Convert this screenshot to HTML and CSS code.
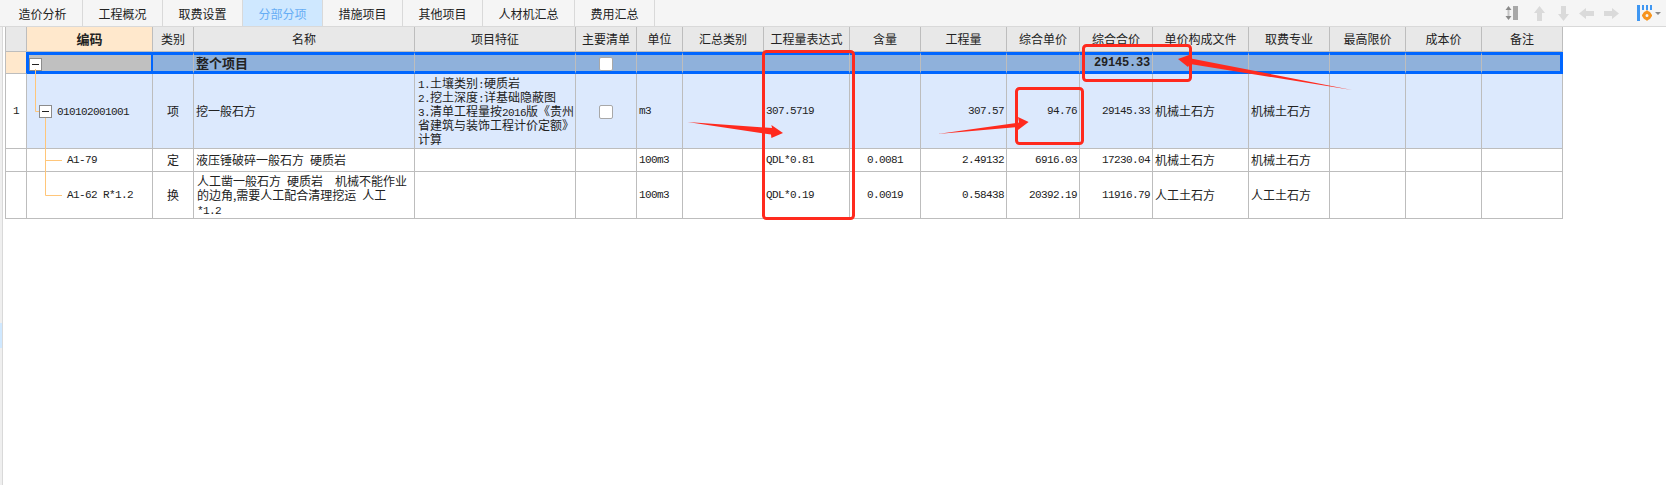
FILE: index.html
```html
<!DOCTYPE html>
<html lang="zh-CN">
<head>
  <meta charset="UTF-8" />
  <title>分部分项</title>
  <link rel="stylesheet" href="styles.css">
</head>
<body>

<div class="page">
  <div class="toolbar">
    <div class="tab tab-first">造价分析</div>
    <div class="tab">工程概况</div>
    <div class="tab">取费设置</div>
    <div class="tab active">分部分项</div>
    <div class="tab">措施项目</div>
    <div class="tab">其他项目</div>
    <div class="tab tab-wide">人材机汇总</div>
    <div class="tab">费用汇总</div>

    <div class="tools">
      <svg class="tool-sort" width="13" height="14" viewBox="0 0 13 14">
        <path d="M3.5 0L6.5 4H0.5Z M3.5 14L0.5 10H6.5Z" fill="#8a8a8a"/>
        <rect x="2.5" y="4" width="2" height="6" fill="#c4c4c4"/>
        <rect x="8" y="0" width="5" height="14" fill="#a8a8a8"/>
      </svg>
      <svg class="tool-up" width="11" height="15" viewBox="0 0 11 15"><path d="M5.5 0L11 7H8V15H3V7H0Z" fill="#dadada"/></svg>
      <svg class="tool-down" width="11" height="15" viewBox="0 0 11 15"><path d="M5.5 15L0 8H3V0H8V8H11Z" fill="#dadada"/></svg>
      <svg class="tool-left" width="15" height="11" viewBox="0 0 15 11"><path d="M0 5.5L7 0V3H15V8H7V11Z" fill="#dadada"/></svg>
      <svg class="tool-right" width="15" height="11" viewBox="0 0 15 11"><path d="M15 5.5L8 0V3H0V8H8V11Z" fill="#dadada"/></svg>
      <svg class="tool-set" width="26" height="16" viewBox="0 0 26 16">
        <rect x="0" y="0" width="3" height="16" fill="#3f97f2"/>
        <rect x="5" y="0" width="2" height="5" fill="#3f97f2"/>
        <rect x="9" y="0" width="2" height="5" fill="#3f97f2"/>
        <rect x="13" y="0" width="2" height="5" fill="#3f97f2"/>
        <circle cx="10" cy="10.5" r="3" fill="none" stroke="#f7941d" stroke-width="3"/>
        <path d="M10 5.5V7 M10 14V15.5 M5 10.5H6.5 M13.5 10.5H15" stroke="#f7941d" stroke-width="2"/>
        <path d="M18 7H24L21 10Z" fill="#8a8a8a"/>
      </svg>
    </div>
  </div>

  <div class="content">
    <div class="side"><div class="side-mark"></div></div>

    <table class="grid">
      <colgroup>
        <col class="c-no"><col class="c-code"><col class="c-type"><col class="c-name"><col class="c-feat">
        <col class="c-main"><col class="c-unit"><col class="c-sum"><col class="c-expr"><col class="c-qty1">
        <col class="c-qty2"><col class="c-price"><col class="c-total"><col class="c-file"><col class="c-major">
        <col class="c-max"><col class="c-cost"><col class="c-note">
      </colgroup>
      <thead>
        <tr>
          <th></th>
          <th class="th-code">编码</th>
          <th>类别</th>
          <th>名称</th>
          <th>项目特征</th>
          <th>主要清单</th>
          <th>单位</th>
          <th>汇总类别</th>
          <th>工程量表达式</th>
          <th>含量</th>
          <th>工程量</th>
          <th>综合单价</th>
          <th>综合合价</th>
          <th>单价构成文件</th>
          <th>取费专业</th>
          <th>最高限价</th>
          <th>成本价</th>
          <th>备注</th>
        </tr>
      </thead>
      <tbody>
        <tr class="row-total">
          <td class="no"></td>
          <td class="code-sel"><span class="expander"></span></td>
          <td></td>
          <td class="title">整个项目</td>
          <td></td>
          <td class="center"><span class="check"></span></td>
          <td></td>
          <td></td>
          <td></td>
          <td></td>
          <td></td>
          <td></td>
          <td class="num right total">29145.33</td>
          <td></td>
          <td></td>
          <td></td>
          <td></td>
          <td class="last"></td>
        </tr>
        <tr class="row-item">
          <td class="no center num">1</td>
          <td class="code-item"><span class="expander"></span><span class="num">010102001001</span></td>
          <td class="center">项</td>
          <td>挖一般石方</td>
          <td class="feat"><span class="num">1.</span>土壤类别<span class="num">:</span>硬质岩<br><span class="num">2.</span>挖土深度<span class="num">:</span>详基础隐蔽图<br><span class="num">3.</span>清单工程量按<span class="num">2016</span>版《贵州<br>省建筑与装饰工程计价定额》<br>计算</td>
          <td class="center"><span class="check"></span></td>
          <td class="num">m3</td>
          <td></td>
          <td class="num">307.5719</td>
          <td></td>
          <td class="num right">307.57</td>
          <td class="num right">94.76</td>
          <td class="num right">29145.33</td>
          <td>机械土石方</td>
          <td>机械土石方</td>
          <td></td>
          <td></td>
          <td></td>
        </tr>
        <tr class="row-sub">
          <td class="no"></td>
          <td class="code-sub num">A1-79</td>
          <td class="center">定</td>
          <td>液压锤破碎一般石方<span class="num">&nbsp;</span>硬质岩</td>
          <td></td>
          <td></td>
          <td class="num">100m3</td>
          <td></td>
          <td class="num">QDL*0.81</td>
          <td class="num center">0.0081</td>
          <td class="num right">2.49132</td>
          <td class="num right">6916.03</td>
          <td class="num right">17230.04</td>
          <td>机械土石方</td>
          <td>机械土石方</td>
          <td></td>
          <td></td>
          <td></td>
        </tr>
        <tr class="row-sub2">
          <td class="no"></td>
          <td class="code-sub num">A1-62 R*1.2</td>
          <td class="center">换</td>
          <td class="feat">人工凿一般石方<span class="num">&nbsp;</span>硬质岩<span class="num">&nbsp;&nbsp;</span>机械不能作业<br>的边角,需要人工配合清理挖运<span class="num">&nbsp;</span>人工<br><span class="num">*1.2</span></td>
          <td></td>
          <td></td>
          <td class="num">100m3</td>
          <td></td>
          <td class="num">QDL*0.19</td>
          <td class="num center">0.0019</td>
          <td class="num right">0.58438</td>
          <td class="num right">20392.19</td>
          <td class="num right">11916.79</td>
          <td>人工土石方</td>
          <td>人工土石方</td>
          <td></td>
          <td></td>
          <td></td>
        </tr>
      </tbody>
    </table>
  </div>

  <!-- tree lines and the red marks drawn on top of the grid -->
  <svg class="overlay" width="1666" height="485" viewBox="0 0 1666 485">
    <g fill="none" stroke="#ffc67a" stroke-width="1">
      <path d="M35.5 69V111.5H39"/>
      <path d="M45.5 118V195.5H62 M45.5 160.5H62"/>
    </g>
    <g fill="none" stroke="#ff2a1e" stroke-width="3">
      <rect x="763.5" y="51.5" width="90" height="167" rx="3"/>
      <rect x="1083.5" y="45.5" width="107" height="35" rx="3"/>
      <rect x="1016.5" y="88.5" width="66" height="55" rx="3"/>
    </g>
    <g fill="#ff2a1e">
      <polygon points="687.5,122 772,128 771.4,125 783,133 771.4,138 771,134.5"/>
      <polygon points="937.5,134 1019,122.5 1018,117 1028.6,122 1018,130 1018,127"/>
      <polygon points="1352,90 1191,58.5 1189,55 1178,59 1188,67 1190,64"/>
    </g>
  </svg>
</div>

</body>
</html>
```

FILE: styles.css
```css
body {
  margin: 0;
  background: #fff;
  font-family: "Noto Sans CJK SC", "Liberation Sans", sans-serif;
  font-size: 12px;
  color: #222;
}
.page {
  position: relative;
  width: 1666px;
  height: 485px;
  overflow: hidden;
}
.overlay {
  position: absolute;
  top: 0;
  left: 0;
  pointer-events: none;
}

/* top tabs */
.toolbar {
  display: flex;
  height: 26px;
  background: #f5f5f5;
  border-bottom: 1px solid #d9d9d9;
}
.tab {
  box-sizing: border-box;
  width: 80px;
  line-height: 28px;
  text-align: center;
  border-right: 1px solid #d9d9d9;
}
.tab-first {
  width: 83px;
  padding-left: 3px;
}
.tab-wide {
  width: 92px;
}
.active {
  background: #cfe8ff;
  color: #66adf5;
}
.tools {
  display: flex;
  align-items: center;
  margin-left: auto;
  padding-right: 3px;
}
.tool-sort {
  margin-right: 16px;
}
.tool-up {
  margin-right: 13px;
}
.tool-down {
  margin-right: 10px;
}
.tool-left {
  margin-right: 10px;
}
.tool-right {
  margin-right: 18px;
}

/* body */
.content {
  display: flex;
  height: 458px;
}
.side {
  box-sizing: content-box;
  width: 2px;
  flex: none;
  margin-right: 2px;
  border-right: 1px solid #d9d9d9;
  background: #efefef;
}
.side-mark {
  height: 25px;
  margin-top: 296px;
  background: #cfe8ff;
}

/* grid */
.grid {
  border-collapse: separate;
  border-spacing: 0;
  table-layout: fixed;
  width: 1558px;
  align-self: flex-start;
  line-height: 14px;
}
.grid th,
.grid td {
  box-sizing: border-box;
  padding: 0 2px;
  border-right: 1px solid #bdbdbd;
  border-bottom: 1px solid #bdbdbd;
  overflow: hidden;
  white-space: nowrap;
}
.grid th:first-child,
.grid td:first-child {
  border-left: 1px solid #bdbdbd;
}
.grid th {
  height: 25px;
  background: #e8e8e8;
  font-weight: normal;
}
.grid .th-code {
  background: #ffe8cc;
  font-weight: bold;
  font-size: 13px;
}
.c-no { width: 22px; }
.c-code { width: 126px; }
.c-type { width: 41px; }
.c-name { width: 221px; }
.c-feat { width: 161px; }
.c-main { width: 61px; }
.c-unit { width: 46px; }
.c-sum { width: 81px; }
.c-expr { width: 86px; }
.c-qty1 { width: 71px; }
.c-qty2 { width: 86px; }
.c-price { width: 73px; }
.c-total { width: 73px; }
.c-file { width: 96px; }
.c-major { width: 81px; }
.c-max { width: 76px; }
.c-cost { width: 76px; }
.c-note { width: 81px; }

.row-total td {
  height: 22px;
  background: #8fb1db;
  border-top: 3px solid #0066ff;
  border-bottom: 3px solid #0066ff;
}
.row-total td.no {
  background: #ffe8cc;
  border-top: 0;
  border-bottom: 1px solid #bdbdbd;
  border-right: 1px solid #0066ff;
}
.row-total td.code-sel {
  background: #c0c0c0;
  border-left: 2px solid #0066ff;
  border-right: 2px solid #0066ff;
  padding-left: 0;
}
.row-total td.last {
  border-right: 3px solid #0066ff;
}
.row-item td {
  height: 75px;
  background: #dce9fd;
}
.row-item td.no {
  background: #fff;
}
.row-sub td {
  height: 23px;
}
.row-sub2 td {
  height: 47px;
}

.num {
  font-family: "Liberation Mono", "Noto Sans CJK SC", monospace;
  font-size: 11px;
  letter-spacing: -0.6px;
}
.feat .num,
.row-sub td .num {
  line-height: 0;
}
.grid .total {
  font-size: 12px;
  font-weight: bold;
  letter-spacing: -0.2px;
}
.title {
  font-size: 13px;
  font-weight: bold;
}
.center {
  text-align: center;
}
.right {
  text-align: right;
}
.grid .feat {
  padding-left: 3px;
}
.expander {
  display: inline-block;
  position: relative;
  box-sizing: border-box;
  width: 13px;
  height: 13px;
  background: #fff;
  border: 1px solid #8c8c8c;
  vertical-align: middle;
}
.expander::after {
  content: "";
  position: absolute;
  left: 2px;
  right: 2px;
  top: 5px;
  height: 1px;
  background: #222;
}
.grid .code-item {
  padding-left: 12px;
}
.code-item .expander {
  margin-right: 5px;
}
.grid .code-sub {
  padding-left: 40px;
}
.check {
  display: inline-block;
  box-sizing: border-box;
  width: 14px;
  height: 14px;
  background: #fff;
  border: 1px solid #a8a8a8;
  border-radius: 2px;
  vertical-align: middle;
}
```
